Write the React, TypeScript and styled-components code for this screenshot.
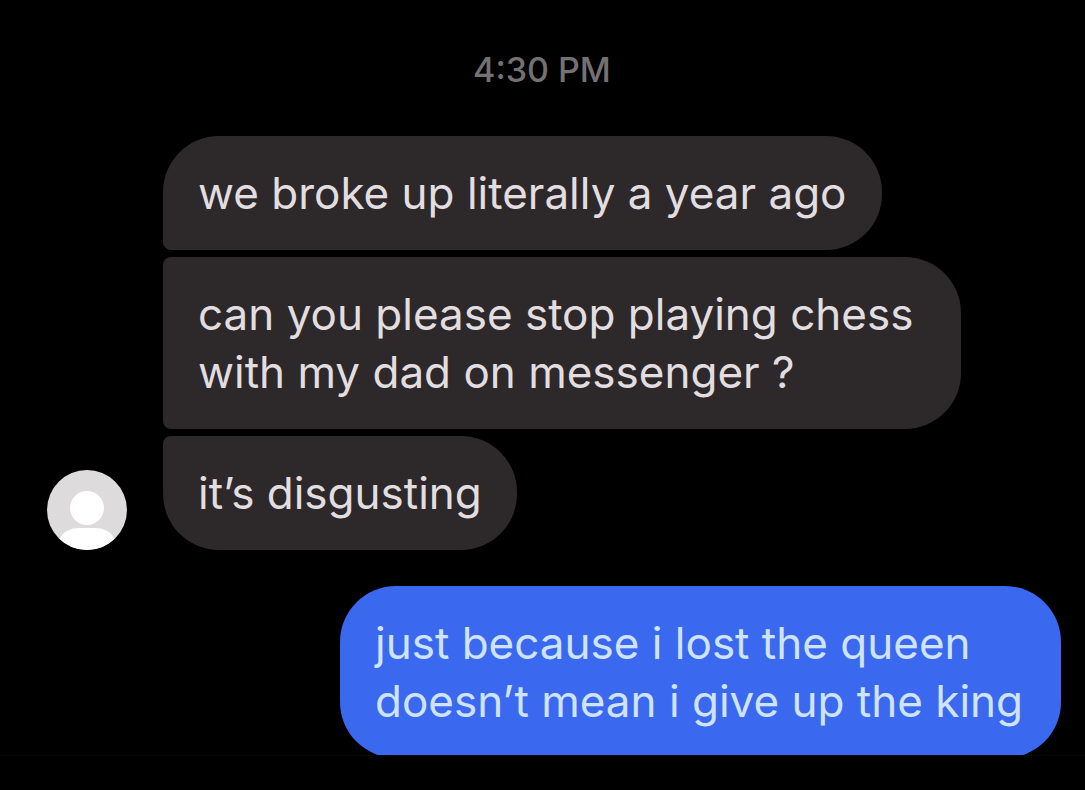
import React from 'react';
import styled, { createGlobalStyle } from 'styled-components';

const GlobalStyle = createGlobalStyle`
  * { box-sizing: border-box; }
  body {
    margin: 0;
    background: #000;
    font-family: Inter, "Liberation Sans", sans-serif;
  }
`;

const Screen = styled.main`
  display: flex;
  flex-direction: column;
  height: 100vh;
  background: #000;
`;

const Thread = styled.section`
  flex: 1;
  min-height: 0;
  overflow: hidden;
  display: flex;
  flex-direction: column;
  padding: 50px 24px 0 47px;
`;

const Timestamp = styled.time`
  flex: none;
  align-self: center;
  margin-bottom: 46px;
  padding-right: 24px;
  font-size: 34px;
  font-weight: 500;
  line-height: 40px;
  color: #757173;
`;

const IncomingGroup = styled.div`
  flex: none;
  display: flex;
  align-items: flex-end;
  gap: 36px;
`;

const Avatar = styled.svg`
  flex: none;
  width: 80px;
  height: 80px;
`;

const BubbleStack = styled.div`
  display: flex;
  flex-direction: column;
  align-items: flex-start;
  gap: 7px;
`;

const Bubble = styled.p<{ $outgoing?: boolean; $joinTop?: boolean; $joinBottom?: boolean }>`
  flex: none;
  margin: 0;
  padding: 28px 35px;
  max-width: ${p => (p.$outgoing ? 721 : 798)}px;
  font-size: 44px;
  line-height: 58px;
  color: ${p => (p.$outgoing ? '#cfe3fc' : '#e2dee0')};
  background: ${p => (p.$outgoing ? '#3a69f0' : '#2d292b')};
  border-radius: 56px;
  ${p => p.$joinTop && 'border-top-left-radius: 8px;'}
  ${p => p.$joinBottom && 'border-bottom-left-radius: 8px;'}
`;

const OutgoingGroup = styled.div`
  flex: none;
  display: flex;
  justify-content: flex-end;
  margin-top: 36px;
`;

const BottomBar = styled.footer`
  flex: none;
  height: 35px;
  border-top: 1px solid #0a090a;
`;

export default function App() {
  return (
    <>
      <GlobalStyle />
      <Screen>
        <Thread>
          <Timestamp>4:30 PM</Timestamp>
          <IncomingGroup>
            <Avatar viewBox="0 0 80 80" role="img" aria-label="Profile picture">
              <defs>
                <clipPath id="avatar-circle">
                  <circle cx="40" cy="40" r="40" />
                </clipPath>
              </defs>
              <g clipPath="url(#avatar-circle)">
                <rect width="80" height="80" fill="#dedbdd" />
                <circle cx="40" cy="38" r="17" fill="#fff" />
                <path d="M12 70C16 61 24 58 32 58h16c8 0 16 3 20 12v10H12z" fill="#fff" />
              </g>
            </Avatar>
            <BubbleStack>
              <Bubble $joinBottom>we broke up literally a year ago</Bubble>
              <Bubble $joinTop $joinBottom>
                can you please stop playing chess with my dad on messenger ?
              </Bubble>
              <Bubble $joinTop>it’s disgusting</Bubble>
            </BubbleStack>
          </IncomingGroup>
          <OutgoingGroup>
            <Bubble $outgoing>just because i lost the queen doesn’t mean i give up the king</Bubble>
          </OutgoingGroup>
        </Thread>
        <BottomBar />
      </Screen>
    </>
  );
}
